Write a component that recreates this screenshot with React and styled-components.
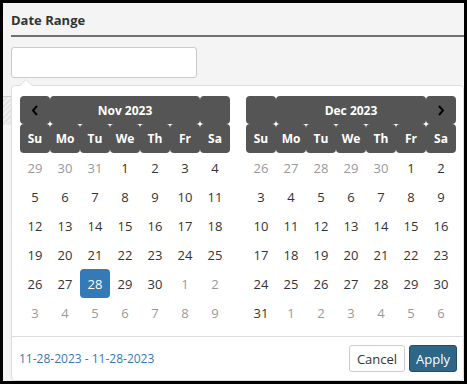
import React from "react";
import styled, { createGlobalStyle } from "styled-components";

const GlobalStyle = createGlobalStyle`
  body {
    margin: 0;
    font-family: "Open Sans", "Liberation Sans", sans-serif;
  }
`;

const Frame = styled.div`
  position: relative;
  width: 467px;
  height: 384px;
  box-sizing: border-box;
  border: 3px solid #000;
  background: #f4f4f4;
  padding-left: 8px;
  overflow: hidden;
`;

const Title = styled.h4`
  margin: 0;
  padding: 8px 0 6px;
  font-size: 13px;
  line-height: 18px;
  font-weight: 700;
  color: #333;
  border-bottom: 2px solid #707070;
`;

const Input = styled.input`
  display: block;
  margin-top: 10px;
  width: 186px;
  height: 31px;
  box-sizing: border-box;
  border: 1px solid #ccc;
  border-radius: 3px;
  background: #fff;
`;

const Strip = styled.div`
  margin: 18px 0 0 -8px;
  height: 28px;
  border-top: 1px solid #ccc;
  background: repeating-linear-gradient(135deg, #eee 0 2px, #e2e2e2 2px 4px);
`;

const Dropdown = styled.div`
  position: absolute;
  left: 8px;
  top: 82px;
  width: 453px;
  box-sizing: border-box;
  background: #fff;
  border: 1px solid #ddd;
  border-radius: 4px;

  &::before,
  &::after {
    content: "";
    position: absolute;
    border-left: 7px solid transparent;
    border-right: 7px solid transparent;
    border-bottom: 7px solid #ddd;
    top: -7px;
    left: 7px;
  }
  &::after {
    border-left-width: 6px;
    border-right-width: 6px;
    border-bottom: 6px solid #fff;
    top: -6px;
    left: 8px;
  }
`;

const Calendars = styled.div`
  display: flex;
  gap: 16px;
  padding: 10px 7px 0 8px;
`;

const Table = styled.table`
  width: 210px;
  border-collapse: separate;
  border-spacing: 0;
  table-layout: fixed;
`;

const Head = styled.th`
  background: #555;
  color: #fff;
  border-radius: 4px;
  padding: 0;
  height: ${(p) => (p.$month ? 28 : 29)}px;
  font-size: 12px;
  font-weight: 700;
  text-align: center;
  vertical-align: middle;
`;

const Day = styled.td`
  width: 30px;
  height: 29px;
  padding: 0;
  text-align: center;
  vertical-align: middle;
  font-size: 13px;
  border-radius: 4px;
  color: ${(p) => (p.$active ? "#fff" : p.$off ? "#999" : "#333")};
  background: ${(p) => (p.$active ? "#337ab7" : "transparent")};
`;

const Footer = styled.div`
  margin-top: 9px;
  border-top: 1px solid #ddd;
  padding: 8px 6px 8px 7px;
  display: flex;
  align-items: center;
  justify-content: space-between;
`;

const Selected = styled.span`
  font-size: 12px;
  color: #337ab7;
`;

const Buttons = styled.div`
  display: flex;
  gap: 4px;
`;

const Button = styled.button`
  height: 27px;
  padding: 0 ${(p) => (p.$primary ? 6 : 7)}px;
  font-family: inherit;
  font-size: 13px;
  border-radius: 3px;
  border: 1px solid ${(p) => (p.$primary ? "#1f4f6b" : "#ccc")};
  background: ${(p) => (p.$primary ? "#2d6686" : "#fff")};
  color: ${(p) => (p.$primary ? "#fff" : "#333")};
`;

const Chevron = ({ dir }) => (
  <svg width="8" height="11" viewBox="0 0 8 11" style={{ display: "block", margin: "0 auto" }}>
    <path
      d={dir === "left" ? "M6 1 L2 5.5 L6 10" : "M2 1 L6 5.5 L2 10"}
      fill="none"
      stroke="#000"
      strokeWidth="2"
    />
  </svg>
);

const WEEK = ["Su", "Mo", "Tu", "We", "Th", "Fr", "Sa"];

function buildWeeks(year, month) {
  const first = new Date(year, month, 1);
  const start = new Date(year, month, 1 - first.getDay());
  const weeks = [];
  for (let w = 0; w < 6; w++) {
    const row = [];
    for (let d = 0; d < 7; d++) {
      const date = new Date(start.getFullYear(), start.getMonth(), start.getDate() + w * 7 + d);
      const inMonth = date.getMonth() === month;
      row.push({
        day: date.getDate(),
        off: !inMonth,
        active: inMonth && month === 10 && date.getDate() === 28,
      });
    }
    weeks.push(row);
  }
  return weeks;
}

const Calendar = ({ year, month, label, prev, next }) => (
  <Table>
    <thead>
      <tr>
        <Head $month>{prev && <Chevron dir="left" />}</Head>
        <Head $month colSpan={5}>{label}</Head>
        <Head $month>{next && <Chevron dir="right" />}</Head>
      </tr>
      <tr>
        {WEEK.map((d) => (
          <Head key={d}>{d}</Head>
        ))}
      </tr>
    </thead>
    <tbody>
      {buildWeeks(year, month).map((row, i) => (
        <tr key={i}>
          {row.map((c, j) => (
            <Day key={j} $off={c.off} $active={c.active}>
              {c.day}
            </Day>
          ))}
        </tr>
      ))}
    </tbody>
  </Table>
);

export default function App() {
  return (
    <>
      <GlobalStyle />
      <Frame>
        <Title>Date Range</Title>
        <Input type="text" />
        <Strip />
        <Dropdown>
          <Calendars>
            <Calendar year={2023} month={10} label="Nov 2023" prev />
            <Calendar year={2023} month={11} label="Dec 2023" next />
          </Calendars>
          <Footer>
            <Selected>11-28-2023 - 11-28-2023</Selected>
            <Buttons>
              <Button>Cancel</Button>
              <Button $primary>Apply</Button>
            </Buttons>
          </Footer>
        </Dropdown>
      </Frame>
    </>
  );
}
